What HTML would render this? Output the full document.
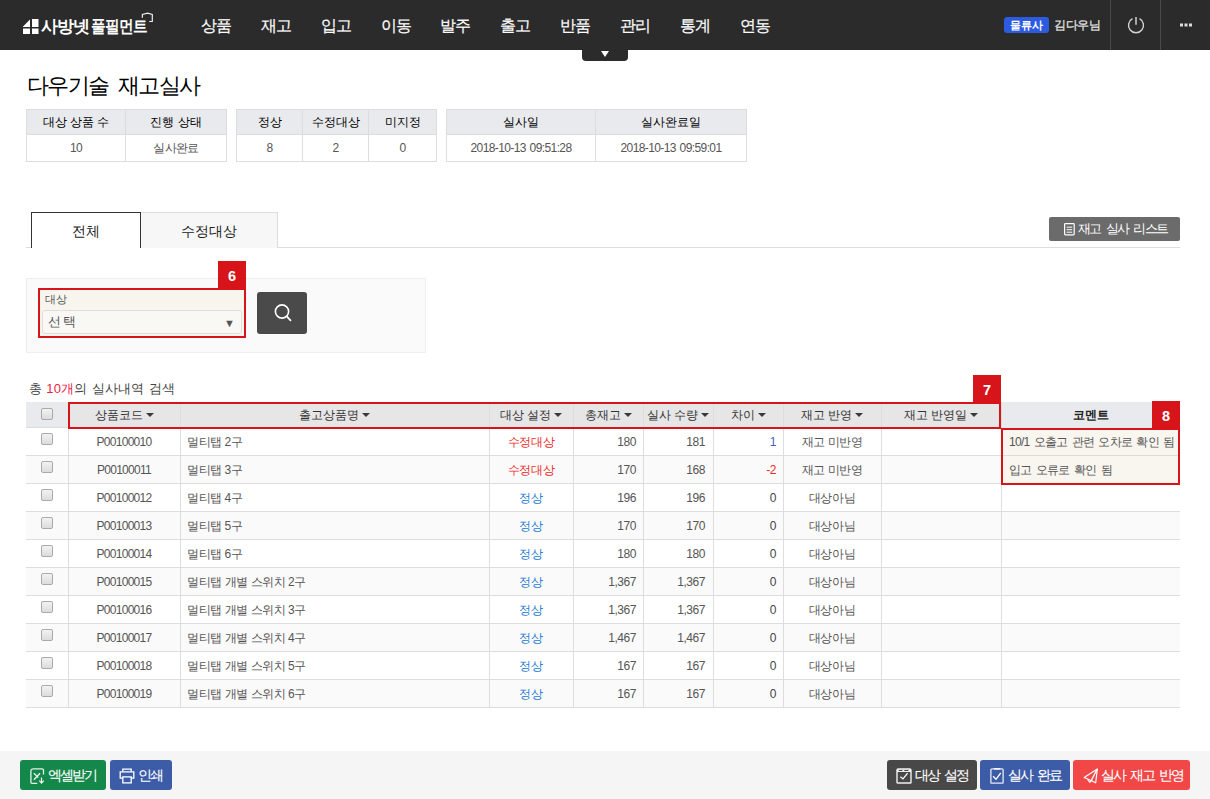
<!DOCTYPE html>
<html><head><meta charset="utf-8">
<style>
*{box-sizing:border-box;margin:0;padding:0}
html,body{width:1210px;height:799px;overflow:hidden;background:#fff;font-family:"Liberation Sans",sans-serif;color:#333}
.abs{position:absolute}
#hdr{position:absolute;left:0;top:0;width:1210px;height:50px;background:#2b2b2b}
.nav{position:absolute;top:16px;margin-left:-1px;font-size:16px;color:#fafafa;line-height:20px;white-space:nowrap;letter-spacing:-1.5px;-webkit-text-stroke:0.2px #fff}
.handle{position:absolute;left:582px;top:50px;width:46px;height:11px;background:#2b2b2b;border-radius:0 0 4px 4px}
.handle:after{content:"";position:absolute;left:19px;top:1px;border-left:4px solid transparent;border-right:4px solid transparent;border-top:6px solid #fff}
h1{position:absolute;left:27px;top:72px;font-size:21.5px;font-weight:normal;color:#000;line-height:28px;white-space:nowrap;letter-spacing:-1.6px;word-spacing:5px}
table{border-collapse:collapse;position:absolute;table-layout:fixed}
.sum th{background:#e9eaee;font-weight:normal;font-size:12px;color:#000;height:25px;border:1px solid #ddd;text-align:center}
.sum td{background:#fff;font-size:12px;color:#555;height:27px;border:1px solid #ddd;text-align:center;letter-spacing:-0.6px;word-spacing:1px}

.tabs{position:absolute;left:26px;top:247px;width:1154px;height:1px;background:#ddd}
.tab{position:absolute;top:212px;height:36px;font-size:14px;line-height:36px;text-align:center;color:#222}
.tab1{left:31px;width:110px;border:1px solid #333;border-bottom:none;background:#fff}
.tab2{left:140px;width:138px;border:1px solid #ddd;border-bottom:none;background:#f7f7f7}
.btn-list{position:absolute;left:1049px;top:217px;width:131px;height:24px;background:#6b6b6b;border-radius:2px;color:#fff;font-size:13px;line-height:24px;letter-spacing:-1.6px;word-spacing:2.8px;white-space:nowrap}
.panel{position:absolute;left:26px;top:278px;width:400px;height:75px;background:#fafafa;border:1px solid #eee}
.redbox{position:absolute;border:2px solid #d7141a}
.redlbl{position:absolute;background:#d7141a;color:#fff;font-weight:bold;font-size:14.5px;text-align:center;padding-top:1px}
.selwrap{left:38px;top:288px;width:208px;height:50px;background:#f8f5ef}
.sel{position:absolute;left:42px;top:310px;width:200px;height:24px;border:1px solid #ddd;border-radius:3px;background:#faf8f4;font-size:13px;line-height:22px;padding-left:5px;color:#555;letter-spacing:1.5px}
.sbtn{position:absolute;left:257px;top:292px;width:50px;height:42px;background:#4a4a4a;border-radius:3px}
.total{position:absolute;left:29px;top:381px;font-size:13px;color:#444;line-height:16px;white-space:nowrap;letter-spacing:0.28px}

.row{position:absolute;left:26px;width:1154px;height:28px;border-bottom:1px solid #ddd}
.vl{position:absolute;top:402px;width:1px;height:306px;background:#ddd}
.cb{position:absolute;left:41px;width:12px;height:12px;border:1px solid #a9a9a9;border-radius:2px;background:linear-gradient(#f2f2f2,#dcdcdc)}
.cell{position:absolute;height:27px;line-height:29px;font-size:12px;color:#555;white-space:nowrap;overflow:visible;letter-spacing:-0.45px}
.c{text-align:center}.r{text-align:right}
.hc{position:absolute;top:402px;height:26px;line-height:26px;font-size:12px;color:#333;text-align:center;white-space:nowrap}
.caret{display:inline-block;width:0;height:0;border-left:4px solid transparent;border-right:4px solid transparent;border-top:4.5px solid #3a3a3a;vertical-align:middle;margin-left:3px;margin-top:-1px}
.num{letter-spacing:-0.5px}

.foot{position:absolute;left:0;top:751px;width:1210px;height:48px;background:#f5f5f5}
.fb{position:absolute;top:760px;height:30px;border-radius:3px;color:#fff;font-size:14px;line-height:30px;white-space:nowrap;letter-spacing:-1.9px;word-spacing:3px;-webkit-text-stroke:0.1px #fff}
.fb svg{position:absolute}
.fb span{position:absolute;top:0}
</style></head><body>
<div id="hdr">
  <svg class="abs" style="left:23px;top:19px" width="16" height="15" viewBox="0 0 16 15"><path d="M7 0.5L0 7.5V8h7z M0 9.5h7V15H0z M9 0h6.5v8H9z M9 9.5h6.5V15H9z" fill="#fff"/></svg>
  <div class="abs" style="left:41px;top:16px;font-size:17px;font-weight:bold;color:#fff;line-height:22px;letter-spacing:-1.2px">사방넷</div>
  <div class="abs" style="left:91px;top:16px;font-size:17px;color:#fff;line-height:22px;letter-spacing:-0.6px;font-weight:bold;transform:scaleX(0.86);transform-origin:0 0;white-space:nowrap">풀필먼트</div>
  <svg class="abs" style="left:140px;top:11px" width="15" height="13" viewBox="0 0 15 13"><path d="M2.4 6.7V3.5L7.5 2.2 12.3 3.5V10.5H9.2" fill="none" stroke="#eee" stroke-width="1.2"/></svg>
  <div class="abs" style="left:1004px;top:17px;width:45px;height:16px;background:#2c5be0;border-radius:3px;color:#fff;font-size:11px;font-weight:bold;text-align:center;line-height:16px">물류사</div>
  <div class="abs" style="left:1054px;top:17px;font-size:12px;color:#e6e6e6;line-height:17px;white-space:nowrap;letter-spacing:-0.4px;-webkit-text-stroke:0.25px #e6e6e6">김다우님</div>
  <div class="abs" style="left:1110px;top:0;width:1px;height:50px;background:#4a4a4a"></div>
  <div class="abs" style="left:1160px;top:0;width:1px;height:50px;background:#4a4a4a"></div>
  <svg class="abs" style="left:1126px;top:15px" width="20" height="20" viewBox="0 0 20 20"><path d="M6.48 3.68A7.5 7.5 0 1 0 13.52 3.68" fill="none" stroke="#d2d2d2" stroke-width="1.4"/><path d="M10 1.9v7.8" stroke="#d2d2d2" stroke-width="1.5"/></svg>
  <svg class="abs" style="left:1179px;top:23px" width="14" height="4" viewBox="0 0 14 4"><rect x="1" y="0.5" width="3" height="3" fill="#ddd"/><rect x="5.5" y="0.5" width="3" height="3" fill="#ddd"/><rect x="10" y="0.5" width="3" height="3" fill="#ddd"/></svg>

  <div class="nav" style="left:202px">상품</div>
  <div class="nav" style="left:262px">재고</div>
  <div class="nav" style="left:322px">입고</div>
  <div class="nav" style="left:382px">이동</div>
  <div class="nav" style="left:441px">발주</div>
  <div class="nav" style="left:501px">출고</div>
  <div class="nav" style="left:561px">반품</div>
  <div class="nav" style="left:621px">관리</div>
  <div class="nav" style="left:681px">통계</div>
  <div class="nav" style="left:741px">연동</div>
</div>
<div class="handle"></div>
<h1>다우기술 재고실사</h1>
<table class="sum" style="left:26px;top:109px;width:200px">
<colgroup><col style="width:99px"><col style="width:101px"></colgroup>
<tr><th>대상 상품 수</th><th>진행 상태</th></tr>
<tr><td>10</td><td>실사완료</td></tr>
</table>
<table class="sum" style="left:236px;top:109px;width:200px">
<colgroup><col style="width:66px"><col style="width:66px"><col style="width:68px"></colgroup>
<tr><th>정상</th><th>수정대상</th><th>미지정</th></tr>
<tr><td>8</td><td>2</td><td>0</td></tr>
</table>
<table class="sum" style="left:446px;top:109px;width:300px">
<colgroup><col style="width:149px"><col style="width:151px"></colgroup>
<tr><th>실사일</th><th>실사완료일</th></tr>
<tr><td>2018-10-13 09:51:28</td><td>2018-10-13 09:59:01</td></tr>
</table>

<div class="tabs"></div>
<div class="tab tab2">수정대상</div>
<div class="tab tab1">전체</div>
<div class="btn-list"><svg class="abs" style="left:15px;top:6px" width="11" height="13" viewBox="0 0 11 13"><rect x="0.6" y="0.6" width="9.6" height="11.2" rx="0.8" fill="none" stroke="#fff" stroke-width="1.2"/><path d="M2.6 4.2h5.6M2.6 6.7h5.6M2.6 9.2h5.6" stroke="#fff" stroke-width="1"/></svg><span class="abs" style="left:29px;top:0">재고 실사 리스트</span></div>
<div class="panel"></div>
<div class="redbox selwrap"></div>
<div class="abs" style="left:45px;top:292px;font-size:11px;color:#555;line-height:14px">대상</div>
<div class="sel">선택<span class="abs" style="right:6px;top:1px;font-size:11px;color:#555;letter-spacing:0">▼</span></div>
<div class="redlbl" style="left:218px;top:261px;width:28px;height:28px;line-height:28px">6</div>
<div class="sbtn"><svg class="abs" style="left:15px;top:11px" width="20" height="20" viewBox="0 0 20 20"><circle cx="10" cy="8.5" r="6.6" fill="none" stroke="#fff" stroke-width="1.6"/><path d="M14.6 13.2l4.3 4.6" stroke="#fff" stroke-width="1.8"/></svg></div>
<div class="total">총 <span style="color:#e8264a">10개</span>의 실사내역 검색</div>
<div id="tbl">
<div class="abs" style="left:26px;top:402px;width:42px;height:26px;background:#e9eaee"></div>
<div class="abs" style="left:68px;top:402px;width:933px;height:26px;background:#e6e6e6"></div>
<div class="abs" style="left:1001px;top:402px;width:179px;height:26px;background:#e9eaee"></div>
<div class="row" style="top:428px;background:#fff"></div>
<div class="cb" style="top:433px"></div>
<div class="cell c" style="left:68px;width:112px;top:428px;letter-spacing:-0.7px">P00100010</div>
<div class="cell" style="left:187px;width:300px;top:428px">멀티탭 2구</div>
<div class="cell c" style="left:489px;width:84px;top:428px;color:#ee2a2a">수정대상</div>
<div class="cell r" style="left:573px;width:63px;top:428px">180</div>
<div class="cell r" style="left:643px;width:62px;top:428px">181</div>
<div class="cell r" style="left:713px;width:63px;top:428px;color:#3f63c8">1</div>
<div class="cell c" style="left:783px;width:98px;top:428px">재고 미반영</div>
<div class="row" style="top:456px;background:#fafafa"></div>
<div class="cb" style="top:461px"></div>
<div class="cell c" style="left:68px;width:112px;top:456px;letter-spacing:-0.7px">P00100011</div>
<div class="cell" style="left:187px;width:300px;top:456px">멀티탭 3구</div>
<div class="cell c" style="left:489px;width:84px;top:456px;color:#ee2a2a">수정대상</div>
<div class="cell r" style="left:573px;width:63px;top:456px">170</div>
<div class="cell r" style="left:643px;width:62px;top:456px">168</div>
<div class="cell r" style="left:713px;width:63px;top:456px;color:#ee2a2a">-2</div>
<div class="cell c" style="left:783px;width:98px;top:456px">재고 미반영</div>
<div class="row" style="top:484px;background:#fff"></div>
<div class="cb" style="top:489px"></div>
<div class="cell c" style="left:68px;width:112px;top:484px;letter-spacing:-0.7px">P00100012</div>
<div class="cell" style="left:187px;width:300px;top:484px">멀티탭 4구</div>
<div class="cell c" style="left:489px;width:84px;top:484px;color:#1f7bd6">정상</div>
<div class="cell r" style="left:573px;width:63px;top:484px">196</div>
<div class="cell r" style="left:643px;width:62px;top:484px">196</div>
<div class="cell r" style="left:713px;width:63px;top:484px;color:#444">0</div>
<div class="cell c" style="left:783px;width:98px;top:484px">대상아님</div>
<div class="row" style="top:512px;background:#fafafa"></div>
<div class="cb" style="top:517px"></div>
<div class="cell c" style="left:68px;width:112px;top:512px;letter-spacing:-0.7px">P00100013</div>
<div class="cell" style="left:187px;width:300px;top:512px">멀티탭 5구</div>
<div class="cell c" style="left:489px;width:84px;top:512px;color:#1f7bd6">정상</div>
<div class="cell r" style="left:573px;width:63px;top:512px">170</div>
<div class="cell r" style="left:643px;width:62px;top:512px">170</div>
<div class="cell r" style="left:713px;width:63px;top:512px;color:#444">0</div>
<div class="cell c" style="left:783px;width:98px;top:512px">대상아님</div>
<div class="row" style="top:540px;background:#fff"></div>
<div class="cb" style="top:545px"></div>
<div class="cell c" style="left:68px;width:112px;top:540px;letter-spacing:-0.7px">P00100014</div>
<div class="cell" style="left:187px;width:300px;top:540px">멀티탭 6구</div>
<div class="cell c" style="left:489px;width:84px;top:540px;color:#1f7bd6">정상</div>
<div class="cell r" style="left:573px;width:63px;top:540px">180</div>
<div class="cell r" style="left:643px;width:62px;top:540px">180</div>
<div class="cell r" style="left:713px;width:63px;top:540px;color:#444">0</div>
<div class="cell c" style="left:783px;width:98px;top:540px">대상아님</div>
<div class="row" style="top:568px;background:#fafafa"></div>
<div class="cb" style="top:573px"></div>
<div class="cell c" style="left:68px;width:112px;top:568px;letter-spacing:-0.7px">P00100015</div>
<div class="cell" style="left:187px;width:300px;top:568px">멀티탭 개별 스위치 2구</div>
<div class="cell c" style="left:489px;width:84px;top:568px;color:#1f7bd6">정상</div>
<div class="cell r" style="left:573px;width:63px;top:568px">1,367</div>
<div class="cell r" style="left:643px;width:62px;top:568px">1,367</div>
<div class="cell r" style="left:713px;width:63px;top:568px;color:#444">0</div>
<div class="cell c" style="left:783px;width:98px;top:568px">대상아님</div>
<div class="row" style="top:596px;background:#fff"></div>
<div class="cb" style="top:601px"></div>
<div class="cell c" style="left:68px;width:112px;top:596px;letter-spacing:-0.7px">P00100016</div>
<div class="cell" style="left:187px;width:300px;top:596px">멀티탭 개별 스위치 3구</div>
<div class="cell c" style="left:489px;width:84px;top:596px;color:#1f7bd6">정상</div>
<div class="cell r" style="left:573px;width:63px;top:596px">1,367</div>
<div class="cell r" style="left:643px;width:62px;top:596px">1,367</div>
<div class="cell r" style="left:713px;width:63px;top:596px;color:#444">0</div>
<div class="cell c" style="left:783px;width:98px;top:596px">대상아님</div>
<div class="row" style="top:624px;background:#fafafa"></div>
<div class="cb" style="top:629px"></div>
<div class="cell c" style="left:68px;width:112px;top:624px;letter-spacing:-0.7px">P00100017</div>
<div class="cell" style="left:187px;width:300px;top:624px">멀티탭 개별 스위치 4구</div>
<div class="cell c" style="left:489px;width:84px;top:624px;color:#1f7bd6">정상</div>
<div class="cell r" style="left:573px;width:63px;top:624px">1,467</div>
<div class="cell r" style="left:643px;width:62px;top:624px">1,467</div>
<div class="cell r" style="left:713px;width:63px;top:624px;color:#444">0</div>
<div class="cell c" style="left:783px;width:98px;top:624px">대상아님</div>
<div class="row" style="top:652px;background:#fff"></div>
<div class="cb" style="top:657px"></div>
<div class="cell c" style="left:68px;width:112px;top:652px;letter-spacing:-0.7px">P00100018</div>
<div class="cell" style="left:187px;width:300px;top:652px">멀티탭 개별 스위치 5구</div>
<div class="cell c" style="left:489px;width:84px;top:652px;color:#1f7bd6">정상</div>
<div class="cell r" style="left:573px;width:63px;top:652px">167</div>
<div class="cell r" style="left:643px;width:62px;top:652px">167</div>
<div class="cell r" style="left:713px;width:63px;top:652px;color:#444">0</div>
<div class="cell c" style="left:783px;width:98px;top:652px">대상아님</div>
<div class="row" style="top:680px;background:#fafafa"></div>
<div class="cb" style="top:685px"></div>
<div class="cell c" style="left:68px;width:112px;top:680px;letter-spacing:-0.7px">P00100019</div>
<div class="cell" style="left:187px;width:300px;top:680px">멀티탭 개별 스위치 6구</div>
<div class="cell c" style="left:489px;width:84px;top:680px;color:#1f7bd6">정상</div>
<div class="cell r" style="left:573px;width:63px;top:680px">167</div>
<div class="cell r" style="left:643px;width:62px;top:680px">167</div>
<div class="cell r" style="left:713px;width:63px;top:680px;color:#444">0</div>
<div class="cell c" style="left:783px;width:98px;top:680px">대상아님</div>
<div class="vl" style="left:68px"></div>
<div class="vl" style="left:180px"></div>
<div class="vl" style="left:489px"></div>
<div class="vl" style="left:573px"></div>
<div class="vl" style="left:643px"></div>
<div class="vl" style="left:713px"></div>
<div class="vl" style="left:783px"></div>
<div class="vl" style="left:881px"></div>
<div class="vl" style="left:1001px"></div>

<div class="abs" style="left:26px;top:427px;width:42px;height:1px;background:#dcdcdc"></div>
<div class="cb" style="top:408px"></div>
<div class="hc" style="left:68px;width:112px">상품코드<i class="caret"></i></div>
<div class="hc" style="left:180px;width:309px">출고상품명<i class="caret"></i></div>
<div class="hc" style="left:489px;width:84px">대상 설정<i class="caret"></i></div>
<div class="hc" style="left:573px;width:70px">총재고<i class="caret"></i></div>
<div class="hc" style="left:643px;width:70px">실사 수량<i class="caret"></i></div>
<div class="hc" style="left:713px;width:70px">차이<i class="caret"></i></div>
<div class="hc" style="left:783px;width:98px">재고 반영<i class="caret"></i></div>
<div class="hc" style="left:881px;width:120px">재고 반영일<i class="caret"></i></div>
<div class="hc" style="left:1001px;width:179px;font-weight:bold;color:#222">코멘트</div>
<div class="redbox" style="left:68px;top:402px;width:933px;height:27px"></div>
<div class="redlbl" style="left:973px;top:375px;width:28px;height:28px;line-height:28px">7</div>
<div class="abs" style="left:1001px;top:428px;width:179px;height:57px;background:#f9f6f0"></div>
<div class="abs" style="left:1001px;top:455px;width:179px;height:1px;background:#ddd"></div>

<div class="cell" style="left:1009px;top:428px;letter-spacing:-0.7px;word-spacing:1.5px">10/1 오출고 관련 오차로 확인 됨</div>
<div class="cell" style="left:1009px;top:456px;letter-spacing:-0.7px;word-spacing:1.5px">입고 오류로 확인 됨</div>
<div class="redbox" style="left:1001px;top:428px;width:179px;height:57px"></div>
<div class="redlbl" style="left:1152px;top:401px;width:28px;height:28px;line-height:28px">8</div>
</div>

<div class="foot"></div>
<div class="fb" style="left:20px;width:86px;background:#14874a">
 <svg style="left:10px;top:8px" width="16" height="17" viewBox="0 0 16 17"><path d="M13.5 6.6V2.4Q13.5 0.8 11.9 0.8H3.3Q0.9 0.8 0.9 3.2V14.2Q0.9 15.3 2 15.3H7.3" fill="none" stroke="#e4f1e8" stroke-width="1.3"/><path d="M3.9 5.2L7.1 8.4M10 5.2L3.9 11.8M7.1 8.4L8.3 9.6" stroke="#eef6f0" stroke-width="1.3"/><path d="M11.5 9.5v5.8M9.3 12.6l2.2 2.6 2.3-2.6" fill="none" stroke="#eef6f0" stroke-width="1.2"/></svg>
 <span style="left:28px">엑셀받기</span></div>
<div class="fb" style="left:110px;width:62px;background:#3c5ca8">
 <svg style="left:9px;top:7px" width="16" height="17" viewBox="0 0 16 17"><path d="M3.8 4.4V2.1H12.2V4.4" fill="none" stroke="#fff" stroke-width="1.3"/><path d="M3.8 11.2H1.2V4.8H14.8V11.2H12.2" fill="none" stroke="#fff" stroke-width="1.3"/><rect x="3.8" y="9.9" width="8.4" height="6" fill="none" stroke="#fff" stroke-width="1.3"/></svg>
 <span style="left:28px">인쇄</span></div>
<div class="fb" style="left:887px;width:90px;background:#484848">
 <svg style="left:9px;top:8px" width="17" height="17" viewBox="0 0 17 17"><path d="M2.3 1H13.7Q15 1 15 2.3V14.4Q15 15 14.4 15H1.6Q1 15 1 14.4V2.3Q1 1 2.3 1z" fill="none" stroke="#f0f0f0" stroke-width="1.4"/><path d="M1 1.5H15V4H1z" fill="#f0f0f0"/><path d="M2.8 2H6.4V2.9H2.8zM8.3 2H12.3V2.9H8.3z" fill="#484848"/><path d="M4.4 8.7L7 10.9 11.6 5.2" fill="none" stroke="#fff" stroke-width="1.3"/></svg>
 <span style="left:28px">대상 설정</span></div>
<div class="fb" style="left:980px;width:90px;background:#3c5ca8">
 <svg style="left:10px;top:8px" width="15" height="17" viewBox="0 0 15 17"><path d="M2 0.9H12.2Q13.1 0.9 13.1 1.8V14.8Q13.1 15.1 12.8 15.1H1.4Q0.9 15.1 0.9 14.6V2Q0.9 0.9 2 0.9z" fill="none" stroke="#e6e9f4" stroke-width="1.3"/><path d="M4 0.2H10.3V1.6H4z" fill="#fff"/><path d="M3.1 8.3L6 11.3 10.7 5" fill="none" stroke="#fff" stroke-width="1.3"/></svg>
 <span style="left:28px">실사 완료</span></div>
<div class="fb" style="left:1073px;width:117px;background:#f24747">
 <svg style="left:10px;top:8px" width="16" height="16" viewBox="0 0 16 16"><path d="M1.2 9.5L14.3 1 12.7 14.8z" fill="none" stroke="#fff" stroke-width="1.2" stroke-linejoin="round"/><path d="M14.3 1L6.9 14.5 4.5 11.5" fill="none" stroke="#fff" stroke-width="1.1" stroke-linejoin="round"/><path d="M14.3 1L8.5 13.2" fill="none" stroke="#fff" stroke-width="0.6"/></svg>
 <span style="left:28px">실사 재고 반영</span></div>
</body></html>
